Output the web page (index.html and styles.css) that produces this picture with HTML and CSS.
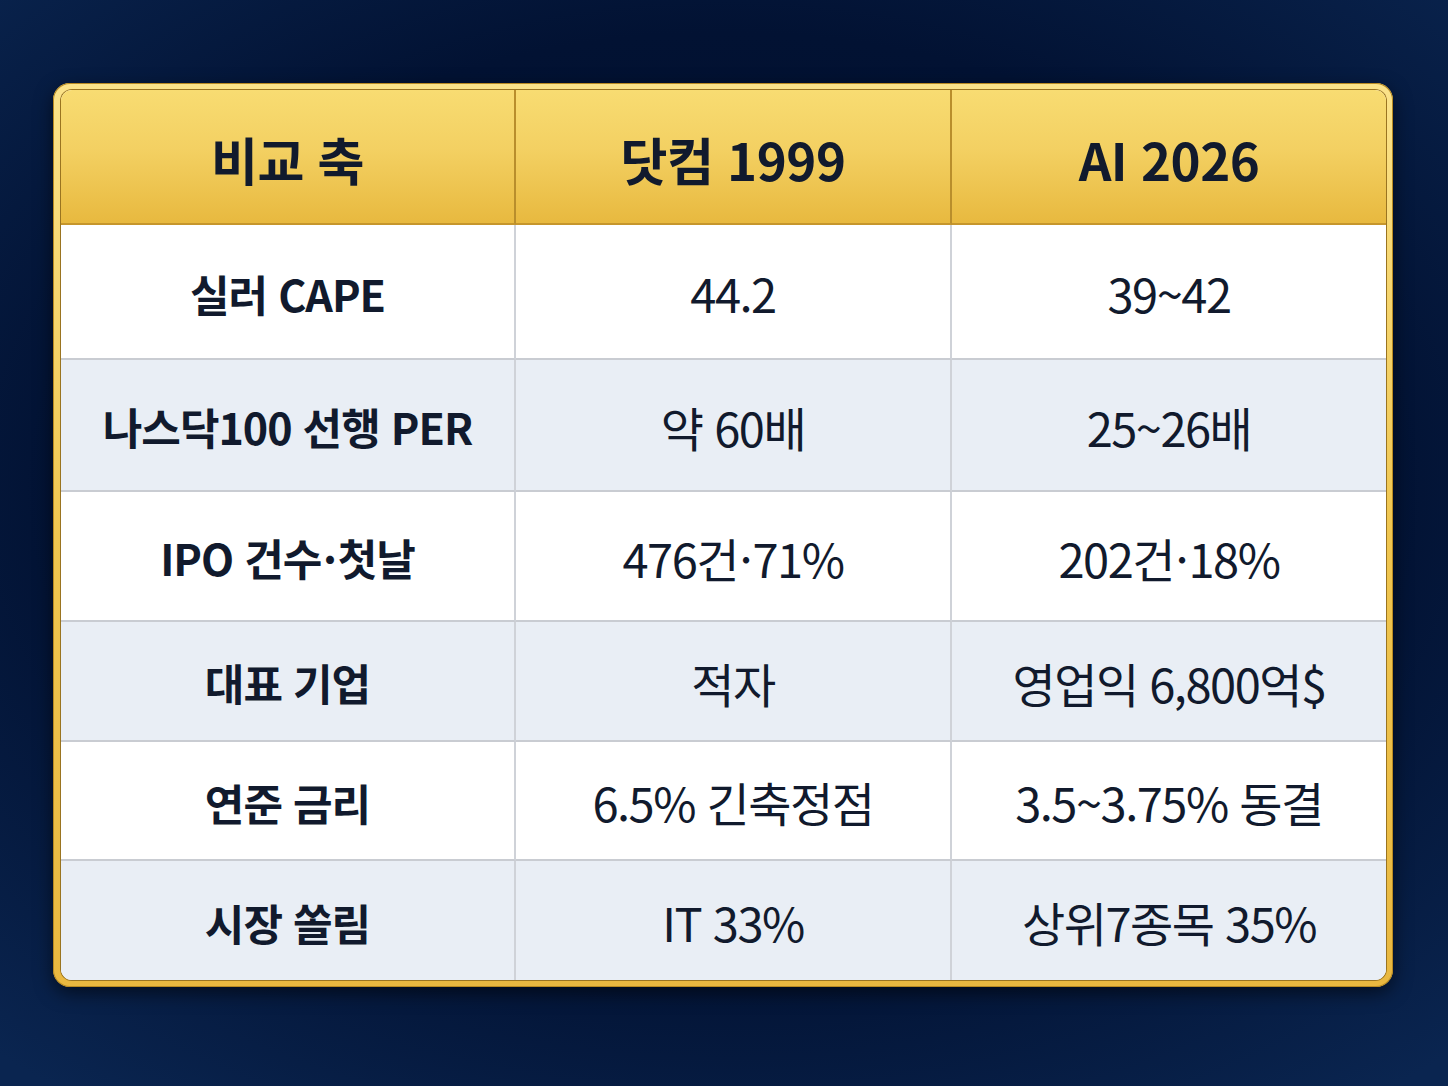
FILE: index.html
```html
<!DOCTYPE html>
<html lang="ko">
<head>
<meta charset="utf-8">
<title>닷컴 1999 vs AI 2026</title>
<link rel="stylesheet" href="styles.css">
</head>
<body>
<div class="page">
  <div class="frame">
    <div class="table">
      <div class="cell head">비교 축</div>
      <div class="cell head">닷컴 1999</div>
      <div class="cell head last">AI 2026</div>

      <div class="cell label">실러 CAPE</div>
      <div class="cell">44.2</div>
      <div class="cell last">39~42</div>

      <div class="cell label alt">나스닥100 선행 PER</div>
      <div class="cell alt">약 60배</div>
      <div class="cell alt last">25~26배</div>

      <div class="cell label">IPO 건수&#8202;·&#8202;첫날</div>
      <div class="cell">476건&#8202;·&#8202;71%</div>
      <div class="cell last">202건&#8202;·&#8202;18%</div>

      <div class="cell label alt">대표 기업</div>
      <div class="cell alt">적자</div>
      <div class="cell alt last">영업익 6,800억$</div>

      <div class="cell label">연준 금리</div>
      <div class="cell">6.5% 긴축정점</div>
      <div class="cell last">3.5~3.75% 동결</div>

      <div class="cell label alt bottom">시장 쏠림</div>
      <div class="cell alt bottom">IT 33%</div>
      <div class="cell alt bottom last">상위7종목 35%</div>
    </div>
  </div>
</div>
</body>
</html>
```
FILE: styles.css
```css
html, body {
  margin: 0;
  padding: 0;
}
body {
  width: 1448px;
  height: 1086px;
  overflow: hidden;
  background:
    radial-gradient(ellipse 75% 70% at 50% 45%, #010d27 0%, #021233 60%, #0a2550 100%);
  font-family: "Noto Sans CJK KR", "Noto Sans", sans-serif;
  color: #111a2d;
}
.page {
  padding: 83px 0 0 53px;
}
.frame {
  width: 1340px;
  box-sizing: border-box;
  border-radius: 17px;
  padding: 7px 7px 7px 8px;
  background: linear-gradient(180deg, #fbe38a 0%, #f0c650 50%, #e9b840 100%);
  box-shadow: 0 6px 18px rgba(0, 0, 0, 0.55), inset 0 0 0 1px #b88a22;
}
.table {
  display: grid;
  grid-template-columns: 455px 436px 1fr;
  grid-template-rows: 135px 135px 132px 130px 120px 119px 119px;
  border-radius: 11px;
  overflow: hidden;
  box-shadow: 0 0 0 1px #9a7420;
  background: #ffffff;
}
.cell {
  display: flex;
  align-items: center;
  justify-content: center;
  font-size: 47px;
  font-weight: 400;
  letter-spacing: -1.5px;
  background: #ffffff;
  border-right: 2px solid #cfd2d8;
  border-bottom: 2px solid #c9ccd2;
  padding-top: 2px;
}
.cell.last {
  border-right: none;
}
.cell.bottom {
  border-bottom: none;
}
.cell.alt {
  background: #e9eef5;
}
.head {
  font-size: 51px;
  font-weight: 700;
  letter-spacing: -0.5px;
  background: linear-gradient(180deg, #f8dc72 0%, #f3d062 45%, #e8b93f 100%);
  border-right: 2px solid #b98e2c;
  border-bottom: 2px solid #c6962c;
  padding-top: 4px;
}
.head.last {
  border-right: none;
}
.label {
  font-weight: 700;
  font-size: 43px;
  letter-spacing: -1px;
}
```
